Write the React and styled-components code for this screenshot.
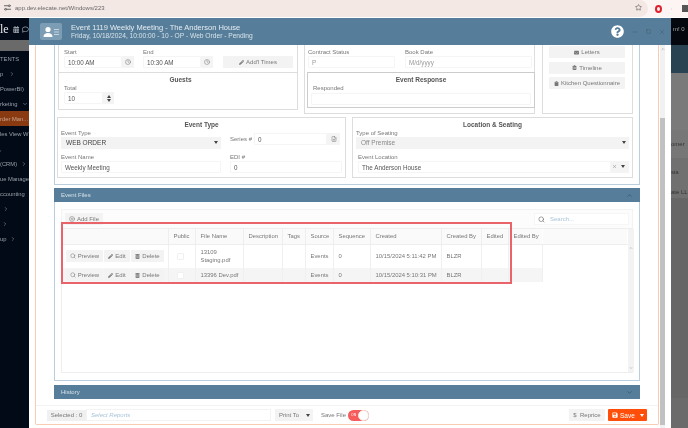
import styled, { createGlobalStyle } from "styled-components";
import { ChevronRight, ChevronDown, ChevronUp, Clock, Search, CirclePlus, FilePlus, X, Minus, Square, Star } from "lucide-react";
import { FaCalendarAlt, FaClipboard, FaClipboardList, FaEnvelope, FaPencilAlt, FaQuestionCircle, FaRegComment, FaSave, FaTrashAlt } from "react-icons/fa";

const GlobalStyle = createGlobalStyle`
  html, body { margin: 0; padding: 0; width: 688px; height: 428px; overflow: hidden; background: #fff; }
  * { box-sizing: border-box; }
  body { font-family: "Liberation Sans", Arial, sans-serif; font-size: 6px; color: #666; }
`;

const Page = styled.div`
  width: 688px;
  height: 428px;
  display: flex;
  flex-direction: column;
  overflow: hidden;
  filter: blur(0.3px);
`;

const BrowserBar = styled.div`
  height: 18px;
  flex: none;
  display: flex;
  align-items: center;
  background: #fdf5f3;
  border-bottom: 1px solid #fff;
`;

const UrlPill = styled.div`
  width: 648px;
  height: 17px;
  display: flex;
  align-items: center;
  gap: 4px;
  padding: 0 6px 2px 4px;
  background: #f4e8e5;
  border-radius: 0 9px 9px 0;
  font-size: 6px;
  color: #666;
`;

const UrlText = styled.span`
  flex: 1;
`;

const Extensions = styled.div`
  flex: 1;
  display: flex;
  align-items: center;
  gap: 9px;
  padding-left: 7px;
  overflow: hidden;
`;

const OperaDot = styled.div`
  width: 7px;
  height: 8px;
  flex: none;
  border: 2px solid #e0202c;
  border-radius: 50%;
`;

const GreyTab = styled.div`
  width: 6px;
  height: 7px;
  flex: none;
  margin-left: 1px;
  background: #555;
`;

const Desk = styled.div`
  flex: 1;
  display: flex;
  min-height: 0;
`;

const Sidebar = styled.aside`
  width: 29px;
  flex: none;
  background: #020a18;
  color: #aab0b8;
  overflow: hidden;
  display: flex;
  flex-direction: column;
`;

const SideTop = styled.div`
  height: 22px;
  flex: none;
  display: flex;
  align-items: center;
  gap: 3px;
  color: #98a0a8;
`;

const Logo = styled.span`
  width: 10px;
  font-family: "Liberation Serif", serif;
  font-size: 12px;
  color: #e8e8e8;
`;

const SideGrey = styled.div`
  height: 11px;
  flex: none;
  background: #6a6a6a;
`;

const SideList = styled.div`
  display: flex;
  flex-direction: column;
`;

const SideItem = styled.div`
  height: 15px;
  flex: none;
  display: flex;
  align-items: center;
  padding-right: 1px;
  white-space: nowrap;
  overflow: hidden;
  font-size: 5.8px;
  background: ${p => (p.$active ? "#8a3a10" : "transparent")};
  color: ${p => (p.$active ? "#c9a592" : "#99a0a8")};
`;

const SideText = styled.span`
  flex: none;
`;

const SideGap = styled.span`
  flex: 1;
  display: flex;
  justify-content: ${p => p.$end ? "flex-end" : "flex-start"};
  padding-left: ${p => p.$pad}px;
`;

const Win = styled.section`
  width: 642px;
  flex: none;
  display: flex;
  flex-direction: column;
  background: #fff;
`;

const WinHeader = styled.header`
  height: 27px;
  flex: none;
  display: flex;
  align-items: center;
  padding: 0 6px 0 11px;
  background: #567d99;
  color: #e6edf2;
`;

const CardIcon = styled.div`
  width: 22px;
  height: 17px;
  flex: none;
  display: flex;
  align-items: center;
  justify-content: center;
  margin-right: 9px;
  background: #7d9db4;
  border-radius: 2px;
`;

const TitleWrap = styled.div`
  flex: 1;
`;

const WinTitle = styled.div`
  font-size: 7.5px;
  line-height: 9px;
  margin-bottom: 0.5px;
`;

const WinSub = styled.div`
  font-size: 6.65px;
  line-height: 8px;
  color: #d8e3ea;
`;

const HeaderTools = styled.div`
  display: flex;
  align-items: center;
  gap: 8px;
  color: #3f5d70;
`;

const WinBody = styled.div`
  flex: 1;
  display: flex;
  min-height: 0;
`;

const WinScroll = styled.div`
  width: 5px;
  flex: none;
  margin-left: 1px;
  padding-top: 2px;
  display: flex;
  flex-direction: column;
  align-items: center;
  background: #f1f1f1;
`;

const WinThumb = styled.div`
  margin-top: 67px;
  width: 100%;
  height: 307px;
  background: #c1c1c1;
`;

const Frame = styled.div`
  width: 624px;
  height: 380px;
  margin-left: 6px;
  flex: none;
  padding: 0 18px 0 18px;
  display: flex;
  flex-direction: column;
  border: 1px solid #f9cbb3;
  border-top: none;
  border-radius: 0 0 2px 2px;
`;

const Panel = styled.div`
  height: 140px;
  flex: none;
  padding: 0 6px 0 2px;
  display: flex;
  flex-direction: column;
  gap: 3px;
  border: 1px solid #b9cfdd;
  border-top: none;
`;

const TopRow = styled.div`
  height: 69px;
  flex: none;
  display: flex;
  align-items: flex-start;
  padding-left: 1px;
`;

const Group = styled.div`
  width: ${p => p.$w}px;
  height: ${p => p.$h}px;
  margin-right: ${p => p.$gap || 0}px;
  flex: none;
  border: 1px solid #ddd;
  border-top: none;
  display: flex;
  flex-direction: column;
`;

const TimesRow = styled.div`
  height: 28px;
  flex: none;
  padding: 3px 0 0 5px;
  display: flex;
  align-items: flex-start;
  border-bottom: 1px solid #ddd;
`;

const Field = styled.div`
  width: ${p => p.$w ? p.$w + "px" : "auto"};
  margin-right: ${p => p.$gap || 0}px;
  flex: none;
`;

const Label = styled.div`
  height: 8px;
  line-height: 8px;
  white-space: nowrap;
  font-size: 6px;
  color: #777;
  padding-left: ${p => p.$pad || 0}px;
`;

const InputRow = styled.div`
  display: flex;
  height: 12px;
`;

const Input = styled.div`
  flex: 1;
  height: 12px;
  line-height: 11px;
  padding-left: ${p => p.$pad || 3}px;
  white-space: nowrap;
  overflow: hidden;
  font-size: 6.3px;
  color: ${p => p.$muted ? "#999" : "#555"};
  background: #fff;
  border: 1px solid #f5f5f5;
  border-radius: 1px;
`;

const Addon = styled.div`
  width: ${p => p.$w || 12}px;
  height: 12px;
  flex: none;
  display: flex;
  align-items: center;
  justify-content: center;
  color: #777;
  background: #f4f4f4;
`;

const Button = styled.div`
  width: ${p => p.$w ? p.$w + "px" : "auto"};
  height: 12px;
  flex: none;
  display: flex;
  align-items: center;
  justify-content: center;
  gap: 2px;
  white-space: nowrap;
  font-size: 6px;
  color: #777;
  background: #f3f3f3;
  border-radius: 1px;
`;

const GroupTitle = styled.div`
  height: 9px;
  line-height: 9px;
  text-align: center;
  font-weight: 700;
  font-size: 6.5px;
  color: #555;
`;

const Guests = styled.div`
  padding: 2px 0 0 5px;
`;

const Spin = styled.div`
  width: 11px;
  height: 12px;
  flex: none;
  display: flex;
  flex-direction: column;
  align-items: center;
  justify-content: center;
  gap: 1px;
  background: #f4f4f4;
`;

const Tri = styled.span`
  width: 0;
  height: 0;
  flex: none;
  border-left: 2px solid transparent;
  border-right: 2px solid transparent;
  border-top: ${p => p.$up ? "none" : "3px solid #444"};
  border-bottom: ${p => p.$up ? "3px solid #444" : "none"};
`;

const ContractRow = styled.div`
  height: 27px;
  flex: none;
  padding: 3px 0 0 3px;
  display: flex;
  align-items: flex-start;
`;

const ResponseBox = styled.div`
  width: 228px;
  height: 36px;
  flex: none;
  margin-left: 2px;
  padding: 2px 3px 0 3px;
  border: 1px solid #ccc;
`;

const ResponseLabel = styled(Label)`
  margin: 0 0 1px 2px;
`;

const SideButtons = styled.div`
  padding: 1px 0 0 6px;
  display: flex;
  flex-direction: column;
  gap: 3.3px;
`;

const TallButton = styled(Button)`
  height: 12.3px;
`;

const FormRow = styled.div`
  height: 61px;
  flex: none;
  display: flex;
`;

const FormBox = styled.div`
  width: ${p => p.$w}px;
  margin-right: ${p => p.$gap || 0}px;
  flex: none;
  padding: 1.5px 3px 0;
  border: 1px solid #ddd;
  display: flex;
  flex-direction: column;
`;

const TypeGrid = styled.div`
  display: grid;
  grid-template-columns: 160px 112px;
  column-gap: 9px;
`;

const SeriesCell = styled.div`
  display: flex;
  align-items: center;
  height: 20px;
`;

const SeriesLabel = styled.span`
  width: 24px;
  flex: none;
  font-size: 6px;
  color: #777;
`;

const Caret = styled(Tri)`
  margin: 0 3px 0 auto;
`;

const SelectBox = styled.div`
  height: 12px;
  display: flex;
  align-items: center;
  padding-left: 5px;
  font-size: 6.5px;
  color: ${p => p.$muted ? "#888" : "#444"};
  background: #f3f3f3;
`;

const EventNameGap = styled.div`
  height: 4px;
  grid-column: 1 / 3;
`;

const BlueBar = styled.div`
  height: 14px;
  flex: none;
  margin-top: ${p => p.$mt}px;
  padding: 0 7px;
  display: flex;
  align-items: center;
  justify-content: space-between;
  font-size: 6px;
  color: #d5e2ea;
  background: #567d99;
`;

const FilesBody = styled.div`
  position: relative;
  height: 179px;
  flex: none;
  padding: 7px 6px 7px 6px;
  display: flex;
  flex-direction: column;
  border: 1px solid #b9cfdd;
  border-top: none;
`;

const Toolbar = styled.div`
  height: 19px;
  flex: none;
  padding: 3px 3px 0 3px;
  display: flex;
  justify-content: space-between;
  background: #fcfcfc;
  border: 1px solid #f3f3f3;
  border-bottom: none;
`;

const SearchBox = styled.div`
  width: 95px;
  height: 12px;
  display: flex;
  align-items: center;
  gap: 5px;
  padding-left: 3px;
  font-size: 6px;
  color: #a9c4d8;
  background: #fff;
  border: 1px solid #f6f6f6;
`;

const GridWrap = styled.div`
  flex: 1;
  display: flex;
  border: 1px solid #eee;
  min-height: 0;
`;

const Table = styled.table`
  width: 565px;
  height: fit-content;
  flex: none;
  table-layout: fixed;
  border-collapse: collapse;
  font-size: 5.9px;
  color: #777;
`;

const Th = styled.th`
  height: 15px;
  padding: 0 0 0 5px;
  text-align: left;
  font-weight: 400;
  white-space: nowrap;
  overflow: hidden;
  background: #fafafa;
  border-right: 1px solid ${p => p.$plain ? "transparent" : "#eee"};
  border-bottom: 1px solid #eee;
`;

const Td = styled.td`
  padding: 0 0 0 ${p => p.$pad ?? 5}px;
  line-height: 8.5px;
  white-space: nowrap;
  background: ${p => p.$odd ? "#f5f5f5" : "#fff"};
  border-right: 1px solid #f0f0f0;
`;

const BlankTd = styled.td`
  background: #fff;
`;

const Tr = styled.tr`
  height: ${p => p.$h}px;
`;

const RowActions = styled.div`
  display: flex;
  gap: 1px;
`;

const Check = styled.div`
  width: 7px;
  height: 7px;
  margin-left: 3px;
  border: 1px solid #f0f0f0;
  border-radius: 1px;
  background: #fff;
`;

const GridScroll = styled.div`
  width: 6px;
  flex: none;
  display: flex;
  flex-direction: column;
  justify-content: space-between;
  padding: 17px 0 2px;
  align-items: center;
  background: #f3f3f3;
`;

const RedBox = styled.div`
  position: absolute;
  left: 6px;
  top: 20px;
  width: 451px;
  height: 62px;
  border: 2px solid #e9636a;
  pointer-events: none;
`;

const Footer = styled.div`
  margin: 6px -18px 0;
  padding: 3px 11px 0;
  display: flex;
  align-items: center;
  border-top: 1px solid #f3f3f3;
`;

const SelectedTag = styled.div`
  width: 39px;
  height: 11px;
  flex: none;
  line-height: 11px;
  text-align: center;
  font-size: 6px;
  color: #777;
  background: #f0f0f0;
`;

const ReportsInput = styled.div`
  width: 185px;
  height: 12px;
  flex: none;
  line-height: 11px;
  padding-left: 4px;
  font-size: 6px;
  font-style: italic;
  color: #a9c4d8;
  border: 1px solid #f3f3f3;
`;

const PrintGroup = styled.div`
  display: flex;
  margin: 0 8px 0 4px;
`;

const SaveLabel = styled.span`
  margin-right: 2px;
  font-size: 6px;
  color: #777;
`;

const Toggle = styled.div`
  width: 21px;
  height: 11px;
  flex: none;
  display: flex;
  align-items: center;
  justify-content: space-between;
  padding-left: 3px;
  font-size: 3.5px;
  color: #fff;
  background: #f75c5c;
  border-radius: 6px;
`;

const Knob = styled.span`
  width: 11px;
  height: 11px;
  background: #fff;
  border: 1px solid #f0e6e6;
  border-radius: 50%;
`;

const FooterRight = styled.div`
  margin-left: auto;
  display: flex;
  gap: 3px;
`;

const SaveButton = styled.div`
  width: 39px;
  height: 12px;
  display: flex;
  align-items: center;
  gap: 2px;
  padding: 0 3px 0 4px;
  font-size: 6.5px;
  color: #fff;
  background: #ff4d0a;
  border-radius: 1px;
`;

const WhiteCaret = styled.span`
  margin-left: auto;
  width: 0;
  height: 0;
  border-left: 2px solid transparent;
  border-right: 2px solid transparent;
  border-top: 3px solid #fff;
`;

const Behind = styled.div`
  flex: 1;
  display: flex;
  flex-direction: column;
  overflow: hidden;
  background: #6b6b6b;
  font-size: 6px;
  color: #333;
`;

const BehindTop = styled.div`
  height: 27px;
  flex: none;
  padding: 8px 0 0 2px;
  white-space: nowrap;
  color: #aaa;
  background: #04070d;
`;

const BehindBand = styled.div`
  height: 28px;
  flex: none;
  background: #2a4353;
`;

const BehindRow = styled.div`
  height: ${p => p.$h}px;
  flex: none;
  display: flex;
  align-items: center;
  white-space: nowrap;
  background: ${p => p.$bg};
`;

const columns = [106, 27, 48, 39, 23, 28, 37, 71, 40, 27, 34, 85];

const files = [
  { name: ["13109", "Staging.pdf"], created: "10/15/2024 5:11:42 PM", h: 24 },
  { name: ["13396 Dev.pdf"], created: "10/15/2024 5:10:31 PM", h: 14, odd: true },
];

const menu = [
  { text: "TENTS" },
  { text: "p", icon: "right", pad: 6 },
  { text: "PowerBI)" },
  { text: "rketing", icon: "down" },
  { text: "rder Man...", active: true },
  { text: "les View W" },
  { text: "," },
  { text: "(CRM)", icon: "right", pad: 4 },
  { text: "ue Manage" },
  { text: "ccounting" },
  { text: "", icon: "right", pad: 3 },
  { text: "", icon: "right", pad: 2 },
  { text: "up", icon: "right", pad: 4 },
];

const TimeField = ({ label, value, gap }) => (
  <Field $w={70} $gap={gap}>
    <Label>{label}</Label>
    <InputRow>
      <Input>{value}</Input>
      <Addon><Clock size={6} /></Addon>
    </InputRow>
  </Field>
);

const RowButtons = () => (
  <RowActions>
    <Button $w={37}><Search size={6} />Preview</Button>
    <Button $w={26}><FaPencilAlt size={5} />Edit</Button>
    <Button $w={33}><FaTrashAlt size={5} />Delete</Button>
  </RowActions>
);

export default function App() {
  return (
    <Page>
      <GlobalStyle />
      <BrowserBar>
        <UrlPill>
          <svg width="7" height="7" viewBox="0 0 8 8" fill="none" stroke="#555" strokeWidth="1">
            <path d="M0 2h5M7 2h1M0 6h1M3 6h5" />
            <circle cx="6" cy="2" r="1" />
            <circle cx="2" cy="6" r="1" />
          </svg>
          <UrlText>app.dev.elecate.net/Windows/223</UrlText>
          <Star size={7} color="#555" />
        </UrlPill>
        <Extensions>
          <OperaDot />
          <FaPencilAlt size={6} color="#8a5ac8" />
          <GreyTab />
        </Extensions>
      </BrowserBar>
      <Desk>
        <Sidebar>
          <SideTop>
            <Logo>le</Logo>
            <FaCalendarAlt size={7} />
            <FaRegComment size={7} />
          </SideTop>
          <SideGrey />
          <SideList>
            {menu.map((m, i) => (
              <SideItem key={i} $active={m.active}>
                <SideText>{m.text}</SideText>
                <SideGap $end={m.icon === "down"} $pad={m.pad || 0}>
                  {m.icon === "right" && <ChevronRight size={6} />}
                  {m.icon === "down" && <ChevronDown size={6} />}
                </SideGap>
              </SideItem>
            ))}
          </SideList>
        </Sidebar>
        <Win>
          <WinHeader>
            <CardIcon>
              <svg width="17" height="12" viewBox="0 0 17 12" fill="#fff">
                <circle cx="5" cy="3.5" r="2.6" />
                <path d="M0.5 11c0-3 2-4 4.5-4s4.5 1 4.5 4z" />
                <path d="M11 3h5v1h-5zM11 5.5h5v1h-5zM11 8h5v1h-5z" fill="#c4d3de" />
              </svg>
            </CardIcon>
            <TitleWrap>
              <WinTitle>Event 1119 Weekly Meeting - The Anderson House</WinTitle>
              <WinSub>Friday, 10/18/2024, 10:00:00 - 10 - OP - Web Order - Pending</WinSub>
            </TitleWrap>
            <HeaderTools>
              <FaQuestionCircle size={13} color="#fff" />
              <Minus size={6} />
              <Square size={5} />
              <X size={6} />
            </HeaderTools>
          </WinHeader>
          <WinBody>
            <Frame>
              <Panel>
                <TopRow>
                  <Group $w={240} $h={65} $gap={6}>
                    <TimesRow>
                      <TimeField label="Start" value="10:00 AM" gap={9} />
                      <TimeField label="End" value="10:30 AM" gap={10} />
                      <Field $w={70}>
                        <Label>&nbsp;</Label>
                        <Button $w={70}><FaPencilAlt size={5} />Add'l Times</Button>
                      </Field>
                    </TimesRow>
                    <Guests>
                      <GroupTitle>Guests</GroupTitle>
                      <Label>Total</Label>
                      <InputRow>
                        <Field $w={39}><Input>10</Input></Field>
                        <Spin><Tri $up /><Tri /></Spin>
                      </InputRow>
                    </Guests>
                  </Group>
                  <Group $w={231} $h={69} $gap={7}>
                    <ContractRow>
                      <Field $w={87} $gap={10}>
                        <Label>Contract Status</Label>
                        <Input $muted>P</Input>
                      </Field>
                      <Field $w={127}>
                        <Label>Book Date</Label>
                        <Input $muted>M/d/yyyy</Input>
                      </Field>
                    </ContractRow>
                    <ResponseBox>
                      <GroupTitle>Event Response</GroupTitle>
                      <ResponseLabel>Responded</ResponseLabel>
                      <Input />
                    </ResponseBox>
                  </Group>
                  <Group $w={91} $h={69}>
                    <SideButtons>
                      <TallButton $w={76}><FaEnvelope size={5} />Letters</TallButton>
                      <TallButton $w={76}><FaClipboardList size={5} />Timeline</TallButton>
                      <TallButton $w={76}><FaClipboard size={5} />Kitchen Questionnaire</TallButton>
                    </SideButtons>
                  </Group>
                </TopRow>
                <FormRow>
                  <FormBox $w={289} $gap={6}>
                    <GroupTitle>Event Type</GroupTitle>
                    <TypeGrid>
                      <Field>
                        <Label>Event Type</Label>
                        <SelectBox>WEB ORDER<Caret /></SelectBox>
                      </Field>
                      <SeriesCell>
                        <SeriesLabel>Series #</SeriesLabel>
                        <Field $w={73}><Input>0</Input></Field>
                        <Addon $w={13}><FilePlus size={6} /></Addon>
                      </SeriesCell>
                      <EventNameGap />
                      <Field>
                        <Label>Event Name</Label>
                        <Input>Weekly Meeting</Input>
                      </Field>
                      <Field>
                        <Label>EDI #</Label>
                        <Input>0</Input>
                      </Field>
                    </TypeGrid>
                  </FormBox>
                  <FormBox $w={281}>
                    <GroupTitle>Location &amp; Seating</GroupTitle>
                    <Label>Type of Seating</Label>
                    <SelectBox $muted>Off Premise<Caret /></SelectBox>
                    <EventNameGap />
                    <Label $pad={2}>Event Location</Label>
                    <InputRow>
                      <Field $w={2} />
                      <Input>The Anderson House</Input>
                      <Addon $w={6}><X size={5} /></Addon>
                      <Addon $w={12}><Tri /></Addon>
                    </InputRow>
                  </FormBox>
                </FormRow>
              </Panel>
              <BlueBar $mt={3}>Event Files<ChevronUp size={7} color="#2f4f63" /></BlueBar>
              <FilesBody>
                <Toolbar>
                  <Button $w={38}><CirclePlus size={6} />Add File</Button>
                  <SearchBox><Search size={7} color="#666" />Search...</SearchBox>
                </Toolbar>
                <GridWrap>
                  <Table>
                    <colgroup>
                      {columns.map((w, i) => <col key={i} style={{ width: w }} />)}
                    </colgroup>
                    <thead>
                      <tr>
                        <Th />
                        <Th>Public</Th>
                        <Th>File Name</Th>
                        <Th>Description</Th>
                        <Th>Tags</Th>
                        <Th>Source</Th>
                        <Th>Sequence</Th>
                        <Th>Created</Th>
                        <Th>Created By</Th>
                        <Th>Edited</Th>
                        <Th $plain>Edited By</Th>
                        <Th $plain />
                      </tr>
                    </thead>
                    <tbody>
                      {files.map(f => (
                        <Tr key={f.created} $h={f.h}>
                          <Td $odd={f.odd} $pad={4}><RowButtons /></Td>
                          <Td $odd={f.odd}><Check /></Td>
                          <Td $odd={f.odd}>{f.name.map(n => <div key={n}>{n}</div>)}</Td>
                          <Td $odd={f.odd} />
                          <Td $odd={f.odd} />
                          <Td $odd={f.odd}>Events</Td>
                          <Td $odd={f.odd}>0</Td>
                          <Td $odd={f.odd}>{f.created}</Td>
                          <Td $odd={f.odd}>BLZR</Td>
                          <Td $odd={f.odd} />
                          <Td $odd={f.odd} />
                          <BlankTd />
                        </Tr>
                      ))}
                    </tbody>
                  </Table>
                  <GridScroll>
                    <ChevronUp size={4} color="#777" />
                    <ChevronDown size={4} color="#777" />
                  </GridScroll>
                </GridWrap>
                <RedBox />
              </FilesBody>
              <BlueBar $mt={4}>History<ChevronDown size={7} color="#2f4f63" /></BlueBar>
              <Footer>
                <SelectedTag>Selected : 0</SelectedTag>
                <ReportsInput>Select Reports</ReportsInput>
                <PrintGroup>
                  <Button $w={28}>Print To</Button>
                  <Addon $w={10}><Tri /></Addon>
                </PrintGroup>
                <SaveLabel>Save File</SaveLabel>
                <Toggle>ON<Knob /></Toggle>
                <FooterRight>
                  <Button $w={36}>$&nbsp;&nbsp;Reprice</Button>
                  <SaveButton><FaSave size={6} />Save<WhiteCaret /></SaveButton>
                </FooterRight>
              </Footer>
            </Frame>
            <WinScroll>
              <ChevronUp size={4} color="#555" />
              <WinThumb />
            </WinScroll>
          </WinBody>
        </Win>
        <Behind>
          <BehindTop>m! 0</BehindTop>
          <BehindBand />
          <BehindRow $h={57} $bg="#7a7a7a" />
          <BehindRow $h={28} $bg="#777">omer</BehindRow>
          <BehindRow $h={28} $bg="#707070">sia</BehindRow>
          <BehindRow $h={12} $bg="#707070">ate LL</BehindRow>
          <BehindRow $h={200} $bg="#666" />
        </Behind>
      </Desk>
    </Page>
  );
}
